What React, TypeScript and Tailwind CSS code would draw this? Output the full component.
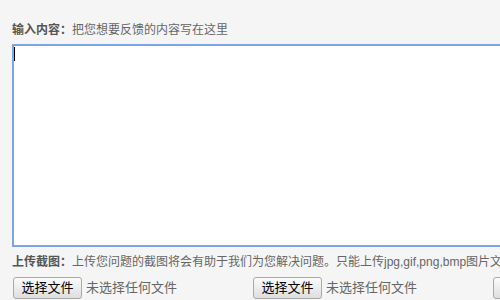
export default function App() {
    // 两个文件上传框
    const uploads = [1, 2, 3]

    return (
        <div className="min-h-screen w-[500px] h-[300px] overflow-hidden bg-[#f5f5f5] pl-[12px] pt-[20px] font-['Liberation_Sans','Noto_Sans_CJK_SC',sans-serif] text-[12px] text-[#666]">

            <div className="h-[20px] leading-[20px] whitespace-nowrap">
                <span className="font-bold text-[#555]">输入内容：</span>把您想要反馈的内容写在这里
            </div>

            <div className="mt-[4px] h-[203px] w-[600px] border-2 border-[#7ca4ea] bg-white">
                <div className="ml-[0px] mt-[1px] h-[14px] w-[1px] bg-black" />
            </div>

            <div className="mt-[5px] h-[20px] leading-[20px] whitespace-nowrap">
                <span className="font-bold text-[#555]">上传截图：</span>上传您问题的截图将会有助于我们为您解决问题。只能上传jpg,gif,png,bmp图片文件，大小不超过2M
            </div>

            <div className="mt-[5px] ml-[1px] flex whitespace-nowrap">
                {uploads.map((u) => (
                    <div key={u} className="flex w-[240px] shrink-0 items-center gap-[4px] text-[13px]">
                        <button className="flex h-[22px] w-[69px] items-center justify-center rounded-[3px] border border-[#a9a9a9] bg-gradient-to-b from-[#fbfbfb] to-[#dedede] leading-[20px] text-black">
                            选择文件
                        </button>
                        <span className="leading-[20px] text-[#666]">未选择任何文件</span>
                    </div>
                ))}
            </div>

        </div>
    )
}
